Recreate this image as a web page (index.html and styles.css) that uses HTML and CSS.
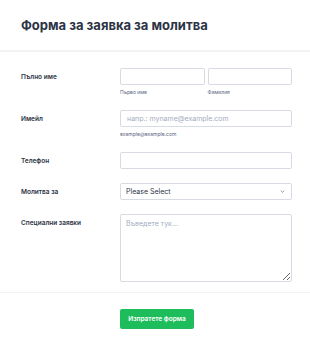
FILE: index.html
```html
<!DOCTYPE html>
<html lang="bg">
<head>
  <meta charset="UTF-8">
  <meta name="viewport" content="width=device-width, initial-scale=1.0">
  <title>Форма за заявка за молитва</title>
  <link rel="stylesheet" href="styles.css">
</head>
<body>
  <div class="form_wrap">
    <div class="form_hd">
      <h1 class="form_title">Форма за заявка за молитва</h1>
    </div>
    <div class="form_bd">
      <div class="form_row">
        <label class="form_label">Пълно име</label>
        <div class="form_field">
          <div class="name_group">
            <div class="name_part">
              <input type="text" class="form_input">
              <span class="sub_label">Първо име</span>
            </div>
            <div class="name_part">
              <input type="text" class="form_input">
              <span class="sub_label">Фамилия</span>
            </div>
          </div>
        </div>
      </div>
      <div class="form_row">
        <label class="form_label">Имейл</label>
        <div class="form_field">
          <input type="text" class="form_input" placeholder="напр.: myname@example.com">
          <span class="sub_label">example@example.com</span>
        </div>
      </div>
      <div class="form_row">
        <label class="form_label">Телефон</label>
        <div class="form_field">
          <input type="text" class="form_input">
        </div>
      </div>
      <div class="form_row">
        <label class="form_label">Молитва за</label>
        <div class="form_field">
          <div class="form_select">
            <span>Please Select</span>
            <svg width="5" height="3" viewBox="0 0 6 4"><path d="M0.7 0.8 L3 3 L5.3 0.8" fill="none" stroke="#57647e" stroke-width="0.9"/></svg>
          </div>
        </div>
      </div>
      <div class="form_row">
        <label class="form_label">Специални заявки</label>
        <div class="form_field">
          <textarea class="form_textarea" placeholder="Въведете тук..."></textarea>
        </div>
      </div>
    </div>
    <div class="form_ft">
      <button class="submit_btn">Изпратете форма</button>
    </div>
  </div>
</body>
</html>
```

FILE: styles.css
```css
body {
  margin: 0;
  background-color: #fff;
  font-family: Inter, "Noto Sans", sans-serif;
  color: #2c3345;
}
.form_wrap {
  width: 310px;
}
.form_hd {
  padding: 16px 21px 0;
  height: 34px;
  border-bottom: 2px solid #f3f3f5;
}
.form_title {
  margin: 0;
  font-size: 13px;
  font-weight: 700;
  line-height: 18px;
}
.form_bd {
  padding: 9px 18px 3px 21px;
}
.form_row {
  display: flex;
  padding: 7px 0;
}
.form_label {
  width: 99px;
  flex-shrink: 0;
  padding-top: 5px;
  font-size: 6.5px;
  font-weight: 600;
  line-height: 8px;
}
.form_field {
  flex: 1;
  display: flex;
  flex-direction: column;
}
.name_group {
  display: flex;
  gap: 3px;
}
.name_part {
  flex: 1;
  display: flex;
  flex-direction: column;
}
.form_input {
  box-sizing: border-box;
  width: 100%;
  height: 17px;
  margin: 0;
  padding: 0 6px;
  border: 1px solid #d8dbe3;
  border-radius: 2px;
  font-family: inherit;
  font-size: 7px;
  color: #2c3345;
  outline: none;
}
.form_input::placeholder,
.form_textarea::placeholder {
  color: #a3acbf;
}
.sub_label {
  margin-top: 4px;
  font-size: 5px;
  line-height: 7px;
  color: #57647e;
}
.form_select {
  box-sizing: border-box;
  height: 17px;
  padding: 0 6px 0 5px;
  display: flex;
  align-items: center;
  justify-content: space-between;
  border: 1px solid #d8dbe3;
  border-radius: 2px;
  font-size: 7px;
  color: #2c3345;
}
.form_textarea {
  box-sizing: border-box;
  width: 100%;
  height: 68px;
  margin: 0;
  padding: 4px 5px;
  border: 1px solid #d8dbe3;
  border-radius: 2px;
  font-family: inherit;
  font-size: 7px;
  resize: vertical;
  outline: none;
}
.form_ft {
  border-top: 1px solid #f3f3f5;
  padding: 12px 0 0 120px;
}
.submit_btn {
  width: 74px;
  height: 20px;
  padding: 0;
  border: none;
  border-radius: 2px;
  background-color: #1ebd5b;
  color: #fff;
  font-family: inherit;
  font-size: 6.5px;
  font-weight: 600;
  cursor: pointer;
}
```
